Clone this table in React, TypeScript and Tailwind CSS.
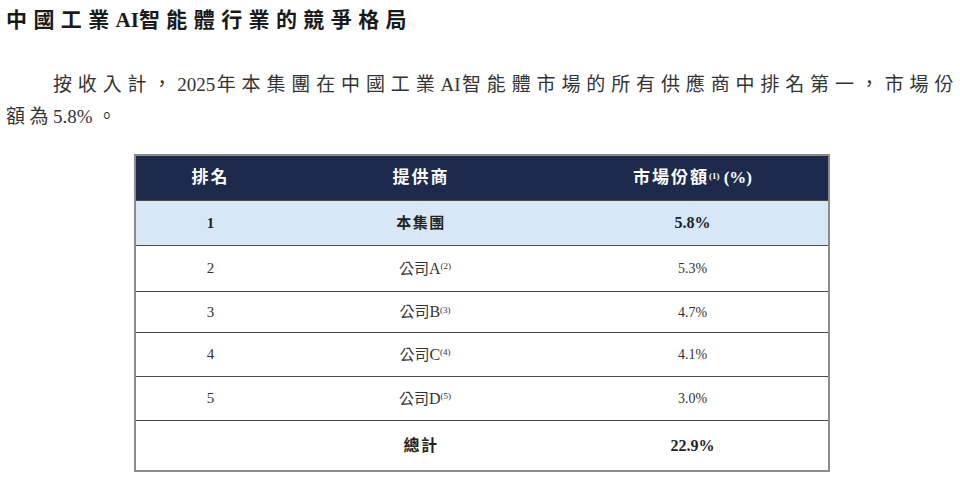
const serif = "font-['Liberation_Serif','Noto_Sans_CJK_TC',serif]"

const rows = [
  { rank: '2', name: '公司', tag: 'A', note: '(2)', share: '5.3%', h: 'h-[46px]' },
  { rank: '3', name: '公司', tag: 'B', note: '(3)', share: '4.7%', h: 'h-[41px]' },
  { rank: '4', name: '公司', tag: 'C', note: '(4)', share: '4.1%', h: 'h-[44px]' },
  { rank: '5', name: '公司', tag: 'D', note: '(5)', share: '3.0%', h: 'h-[44px]' },
]

function Row({ className, children }: { className: string; children: React.ReactNode }) {
  return <div className={`grid grid-cols-[149px_272px_1fr] items-center text-center ${className}`}>{children}</div>
}

export default function App() {
  return (
    <div className={`w-[960px] h-[484px] bg-white pl-[6px] pr-[2px] ${serif}`}>
      <h1 className="pt-[8px] text-[21px] leading-[24px] font-bold tracking-[6.4px] text-[#1a1a1a]">
        中國工業<span className="tracking-normal">AI</span>智能體行業的競爭格局
      </h1>

      <div className="mt-[37px] text-[19px] leading-[32px] text-[#333] tracking-[4.5px]">
        <div className="pl-[47px] [text-align-last:justify]">
          按收入計，<span className="tracking-normal">2025</span>年本集團在中國工業<span className="tracking-normal">AI</span>智能體市場的所有供應商中排名第一，市場份
        </div>
        <div>
          額為<span className="tracking-normal">5.8%&nbsp;</span>。
        </div>
      </div>

      <div className="mt-[21px] ml-[128px] w-[696px] border-2 border-[#8c8c8c]">
        <Row className="h-[44px] bg-[#1e2a4b] text-white font-bold text-[17px] tracking-[2px]">
          <span>排名</span>
          <span>提供商</span>
          <span className="tracking-normal">
            <span className="tracking-[2px]">市場份額</span>
            <sup className="text-[9px] tracking-normal">(1)</sup> (%)
          </span>
        </Row>
        <Row className="h-[45px] bg-[#d7e7f5] border-t border-[#4a4a4a] font-bold text-[15px] text-[#222]">
          <span>1</span>
          <span className="tracking-[1.5px]">本集團</span>
          <span className="text-[16px]">5.8%</span>
        </Row>
        {rows.map((r) => (
          <Row key={r.rank} className={`${r.h} border-t border-[#4a4a4a] text-[15px] text-[#333]`}>
            <span>{r.rank}</span>
            <span className="pl-[8px]">
              {r.name}
              <span className="text-[16px]">{r.tag}</span>
              <sup className="text-[9px]">{r.note}</sup>
            </span>
            <span className="text-[14px]">{r.share}</span>
          </Row>
        ))}
        <Row className="h-[50px] border-t border-[#4a4a4a] font-bold text-[16px] text-[#222]">
          <span />
          <span className="tracking-[1.5px]">總計</span>
          <span>22.9%</span>
        </Row>
      </div>
    </div>
  )
}
